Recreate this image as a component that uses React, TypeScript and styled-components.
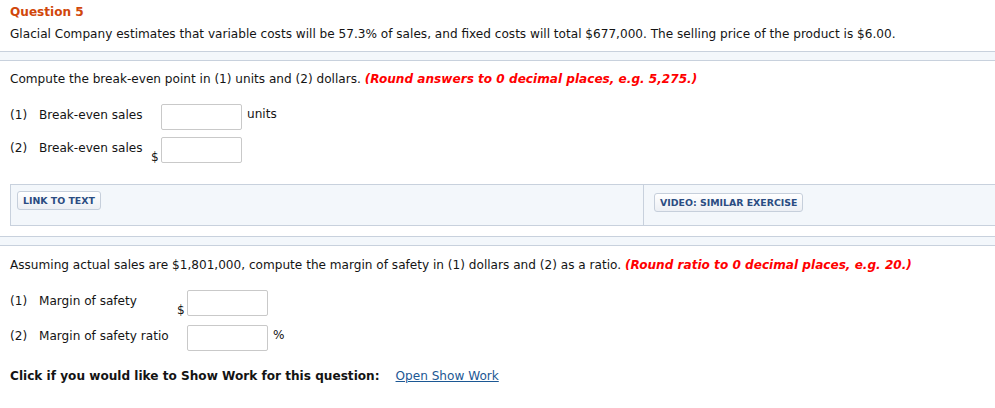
import React from "react";
import styled, { createGlobalStyle } from "styled-components";

const GlobalStyle = createGlobalStyle`
  body {
    margin: 0;
    background: #ffffff;
    font-family: "DejaVu Sans", Verdana, sans-serif;
    font-size: 12.1px;
    color: #141414;
  }
`;

const Page = styled.main`
  display: flex;
  flex-direction: column;
`;

const Header = styled.header`
  padding: 4px 10px 0 10px;
`;

const Title = styled.h2`
  margin: 0;
  font-size: 12.1px;
  line-height: 16px;
  font-weight: bold;
  color: #d1470b;
`;

const Paragraph = styled.p<{ $top?: number }>`
  margin: ${(p) => p.$top ?? 0}px 0 0 0;
  line-height: 16px;
`;

const Band = styled.div<{ $top: number; $height: number }>`
  margin-top: ${(p) => p.$top}px;
  height: ${(p) => p.$height}px;
  background: #f3f7fb;
  border-top: 1px solid #c8d1dd;
  border-bottom: 1px solid #c8d1dd;
`;

const Section = styled.section<{ $top: number }>`
  padding: ${(p) => p.$top}px 10px 0 10px;
`;

const Hint = styled.span`
  color: #ff0000;
  font-weight: bold;
  font-style: italic;
`;

const Rows = styled.div<{ $top: number; $gap: number }>`
  display: flex;
  flex-direction: column;
  gap: ${(p) => p.$gap}px;
  margin-top: ${(p) => p.$top}px;
`;

const Row = styled.div<{ $labelWidth: number }>`
  display: grid;
  grid-template-columns: 29px ${(p) => p.$labelWidth}px 10px 81px auto;
  align-items: start;
`;

const Num = styled.span`
  line-height: 16px;
  padding-top: 3px;
`;

const Label = styled.span`
  line-height: 16px;
  padding-top: 3px;
`;

const Currency = styled.span`
  align-self: end;
  line-height: 14px;
  margin-bottom: -1px;
`;

const Input = styled.input`
  box-sizing: border-box;
  width: 81px;
  height: 26px;
  border: 1px solid #c9c9c9;
  border-radius: 2px;
  background: #ffffff;
  padding: 0 4px;
  font: inherit;
`;

const Unit = styled.span`
  line-height: 16px;
  padding-top: 2px;
  padding-left: 5px;
`;

const ResourceBox = styled.div`
  margin: 21px 0 0 10px;
  display: grid;
  grid-template-columns: 632px 1fr;
  height: 40px;
  background: #f3f7fb;
  border-top: 1px solid #c8d1dd;
  border-bottom: 1px solid #c8d1dd;
  border-left: 1px solid #c8d1dd;
`;

const ResourceCell = styled.div<{ $padTop: number; $padLeft: number; $divider?: boolean }>`
  padding: ${(p) => p.$padTop}px 0 0 ${(p) => p.$padLeft}px;
  border-left: ${(p) => (p.$divider ? "1px solid #c8d1dd" : "none")};
`;

const ResourceButton = styled.button`
  box-sizing: border-box;
  height: 19px;
  padding: 0 5px;
  border: 1px solid #c6cfdb;
  border-radius: 3px;
  background: linear-gradient(#ffffff, #eceff4);
  font-family: "DejaVu Sans", Verdana, sans-serif;
  font-size: 9.4px;
  font-weight: bold;
  color: #2a4c82;
  cursor: pointer;
`;

const Footer = styled.div`
  margin-top: 17px;
  display: flex;
  gap: 16px;
  line-height: 16px;
`;

const Bold = styled.span`
  font-weight: bold;
`;

const ShowWork = styled.a`
  color: #1c5894;
  text-decoration: underline;
  cursor: pointer;
`;

type Field = { num: string; label: string; currency?: string; unit?: string };

const breakEven: Field[] = [
  { num: "(1)", label: "Break-even sales", unit: "units" },
  { num: "(2)", label: "Break-even sales", currency: "$" },
];

const safety: Field[] = [
  { num: "(1)", label: "Margin of safety", currency: "$" },
  { num: "(2)", label: "Margin of safety ratio", unit: "%" },
];

const FieldRows: React.FC<{ fields: Field[]; labelWidth: number; top: number; gap: number }> = ({
  fields,
  labelWidth,
  top,
  gap,
}) => (
  <Rows $top={top} $gap={gap}>
    {fields.map((f) => (
      <Row key={f.num} $labelWidth={labelWidth}>
        <Num>{f.num}</Num>
        <Label>{f.label}</Label>
        <Currency>{f.currency ?? ""}</Currency>
        <Input type="text" />
        <Unit>{f.unit ?? ""}</Unit>
      </Row>
    ))}
  </Rows>
);

const App: React.FC = () => (
  <Page>
    <GlobalStyle />
    <Header>
      <Title>Question 5</Title>
      <Paragraph $top={6}>
        Glacial Company estimates that variable costs will be 57.3% of sales, and fixed costs will
        total $677,000. The selling price of the product is $6.00.
      </Paragraph>
    </Header>
    <Band $top={9} $height={8} />
    <Section $top={10}>
      <Paragraph>
        Compute the break-even point in (1) units and (2) dollars.{" "}
        <Hint>(Round answers to 0 decimal places, e.g. 5,275.)</Hint>
      </Paragraph>
      <FieldRows fields={breakEven} labelWidth={112} top={17} gap={7} />
    </Section>
    <ResourceBox>
      <ResourceCell $padTop={6} $padLeft={6}>
        <ResourceButton>LINK TO TEXT</ResourceButton>
      </ResourceCell>
      <ResourceCell $padTop={8} $padLeft={10} $divider>
        <ResourceButton>VIDEO: SIMILAR EXERCISE</ResourceButton>
      </ResourceCell>
    </ResourceBox>
    <Band $top={10} $height={8} />
    <Section $top={11}>
      <Paragraph>
        Assuming actual sales are $1,801,000, compute the margin of safety in (1) dollars and (2) as
        a ratio. <Hint>(Round ratio to 0 decimal places, e.g. 20.)</Hint>
      </Paragraph>
      <FieldRows fields={safety} labelWidth={138} top={17} gap={9} />
      <Footer>
        <Bold>Click if you would like to Show Work for this question:</Bold>
        <ShowWork>Open Show Work</ShowWork>
      </Footer>
    </Section>
  </Page>
);

export default App;
